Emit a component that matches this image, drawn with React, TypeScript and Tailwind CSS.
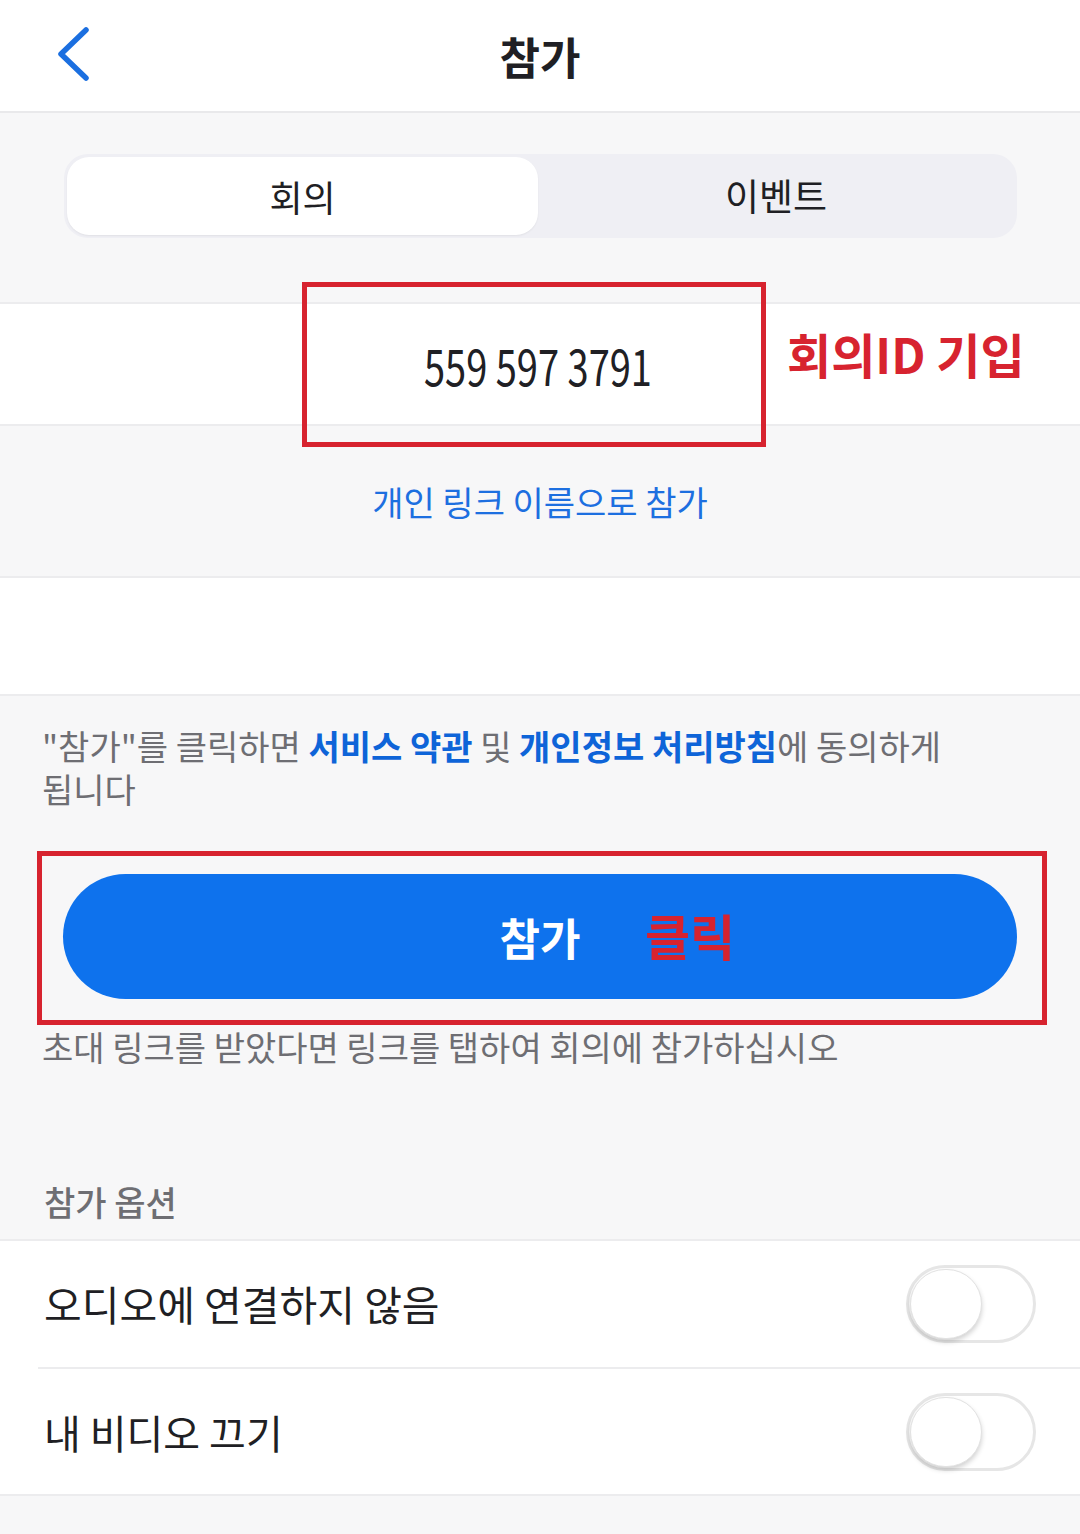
import React from "react";

const font = { fontFamily: '"Noto Sans CJK KR", "Noto Sans", sans-serif' };

function Toggle() {
  return (
    <div className="relative h-[78px] w-[130px] rounded-full border-[3px] border-[#e6e6e6] bg-white">
      <div className="absolute left-[1px] top-[1px] h-[70px] w-[72px] rounded-full border border-[#e2e2e2] bg-white shadow-[0_3px_5px_rgba(0,0,0,0.18)]" />
    </div>
  );
}

export default function App() {
  return (
    <div className="relative w-[1080px] h-[1534px] overflow-hidden bg-[#f7f7f8]" style={font}>
      {/* Header */}
      <div className="relative flex h-[113px] items-center justify-center border-b-2 border-[#e9e9eb] bg-white">
        <svg className="absolute left-[50px] top-[20px]" width="50" height="70" viewBox="0 0 50 70">
          <path d="M36 10 L11 34 L36 58" fill="none" stroke="#1b6fe0" strokeWidth="5.5" strokeLinecap="round" strokeLinejoin="round" />
        </svg>
        <div className="text-[44px] font-bold text-[#1f1f24] leading-none">참가</div>
      </div>

      {/* Segmented */}
      <div className="pt-[41px] pb-[64px] px-[64px]">
        <div className="flex h-[84px] w-[953px] rounded-[24px] bg-[#efeff4] p-[3px]">
          <div className="flex w-[471px] items-center justify-center rounded-[22px] bg-white text-[36px] text-[#1f1f24] shadow-[0_1px_2px_rgba(0,0,0,0.06)]">
            회의
          </div>
          <div className="flex flex-1 items-center justify-center text-[37px] text-[#1f1f24]">
            이벤트
          </div>
        </div>
      </div>

      {/* Meeting ID row */}
      <div className="flex h-[124px] items-center justify-center border-y-2 border-[#ececee] bg-white">
        <span className="inline-block -translate-x-[2px] scale-x-[0.76] text-[50px] leading-none text-[#202024]">
          559 597 3791
        </span>
      </div>

      {/* Personal link */}
      <div className="flex h-[150px] items-center justify-center">
        <span className="text-[34px] text-[#1d6fe0]">개인 링크 이름으로 참가</span>
      </div>

      {/* blank white */}
      <div className="h-[120px] border-y-2 border-[#ececee] bg-white" />

      {/* Terms */}
      <div className="px-[42px] pt-[28px] text-[34px] leading-[43px] text-[#6e6e73]">
        "참가"를 클릭하면 <span className="font-bold text-[#0e64d8]">서비스 약관</span> 및{" "}
        <span className="font-bold text-[#0e64d8]">개인정보 처리방침</span>에 동의하게
        <br />
        됩니다
      </div>

      {/* Join button */}
      <div className="px-[63px] pt-[64px]">
        <div className="relative flex h-[125px] w-[954px] items-center justify-center rounded-full bg-[#0e72ed]">
          <span className="text-[44px] font-bold text-white leading-none">참가</span>
          <span className="absolute left-[582px] top-[36px] text-[49px] font-bold leading-none text-[#d7232f]">클릭</span>
        </div>
      </div>

      <div className="px-[42px] pt-[29px] text-[34px] leading-[38px] text-[#6e6e73]">
        초대 링크를 받았다면 링크를 탭하여 회의에 참가하십시오
      </div>

      <div className="px-[44px] pt-[117px] pb-[18px] text-[34px] font-medium leading-[38px] text-[#6e6e73]">
        참가 옵션
      </div>

      {/* Options */}
      <div className="border-y-2 border-[#ececee] bg-white">
        <div className="flex h-[126px] items-center justify-between pl-[44px] pr-[44px]">
          <span className="text-[41px] text-[#1f1f24]">오디오에 연결하지 않음</span>
          <Toggle />
        </div>
        <div className="ml-[38px] h-[2px] bg-[#ececee]" />
        <div className="flex h-[125px] items-center justify-between pl-[44px] pr-[44px]">
          <span className="text-[40px] text-[#1f1f24]">내 비디오 끄기</span>
          <Toggle />
        </div>
      </div>

      {/* Annotations */}
      <div className="absolute left-[302px] top-[282px] h-[165px] w-[464px] border-[5px] border-[#d7232f]" />
      <div className="absolute left-[787px] top-[329px] text-[48px] font-bold leading-none text-[#d7232f]">회의ID 기입</div>
      <div className="absolute left-[37px] top-[851px] h-[174px] w-[1010px] border-[5px] border-[#d7232f]" />
    </div>
  );
}
